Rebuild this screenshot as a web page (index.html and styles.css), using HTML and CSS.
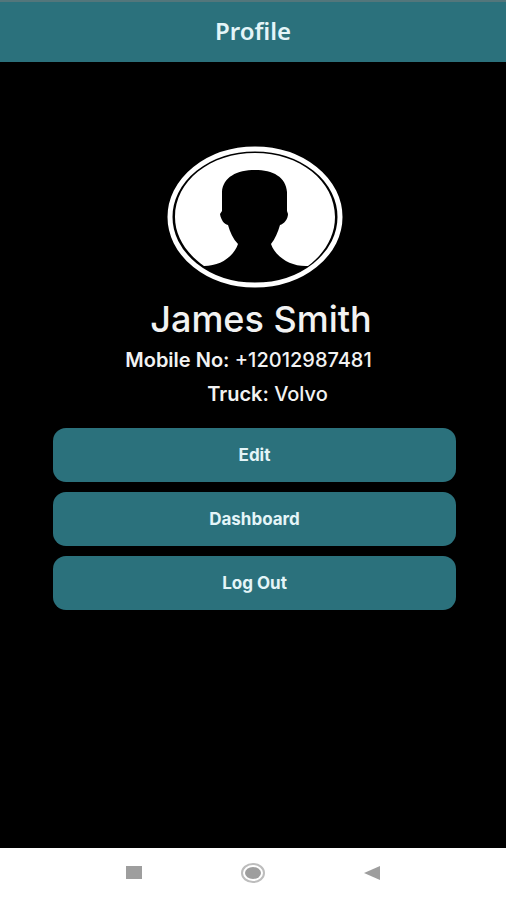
FILE: index.html
```html
<!DOCTYPE html>
<html lang="en">

<head>
    <meta charset="UTF-8">
    <meta name="viewport" content="width=device-width, initial-scale=1.0">
    <title>Profile</title>
    <link rel="stylesheet" href="styles.css">
</head>

<body>
    <header class="header">
        <h1>Profile</h1>
    </header>
    <main class="profile">
        <svg class="avatar" viewBox="0 0 176 142" role="img" aria-label="Avatar">
            <ellipse cx="88" cy="71" rx="85" ry="68" fill="#000" stroke="#fff" stroke-width="5" />
            <path fill="#fff" d="M37 120C20 108 8 91 8 71C8 35 43 7 88 7S168 35 168 71C168 91 157 108 141 120C123 121 108 110 104 98C108 93 111 86 113 79C117 78 121 73 121 68L120 65V46C119 31 106 24 88 24S56 31 55 46V65L53 68C54 74 57 78 61 79C63 86 66 93 71 98C67 110 54 120 37 120Z" />
        </svg>
        <div class="details">
            <h2 class="name">James Smith</h2>
            <p><b>Mobile No:</b> +12012987481</p>
            <p class="truck"><b>Truck:</b> Volvo</p>
        </div>
        <div class="actions">
            <button class="button" type="button">Edit</button>
            <button class="button" type="button">Dashboard</button>
            <button class="button" type="button">Log Out</button>
        </div>
    </main>
    <nav class="navbar">
        <button type="button" aria-label="Recent apps">
            <svg width="16" height="14" viewBox="0 0 16 14"><path fill="#9e9e9e" d="M0 0h16v13H0z" /></svg>
        </button>
        <button type="button" aria-label="Home">
            <svg width="26" height="20" viewBox="0 0 26 20">
                <ellipse cx="13" cy="10" rx="11" ry="9" fill="#fff" stroke="#bdbdbd" stroke-width="2" />
                <ellipse cx="13" cy="10" rx="8" ry="6" fill="#9e9e9e" />
            </svg>
        </button>
        <button type="button" aria-label="Back">
            <svg width="16" height="14" viewBox="0 0 16 14"><path fill="#9e9e9e" d="M16 0v14L0 7z" /></svg>
        </button>
    </nav>
</body>

</html>
```
FILE: styles.css
```css
* {
    box-sizing: border-box;
}

body {
    margin: 0;
    min-height: 100vh;
    display: flex;
    flex-direction: column;
    background: #000;
    color: #F2F2F2;
    font-family: Inter, Roboto, sans-serif;
}

h1,
h2,
p {
    margin: 0;
}

button {
    border: none;
    cursor: pointer;
}

.header {
    padding: 14px 0 16px;
    border-top: 2px solid #53767B;
    background: #2B717C;
    color: #E4F5F8;
    text-align: center;
}

.header h1 {
    font: 600 24px/30px "Noto Sans", sans-serif;
}

.profile {
    flex: 1;
    display: flex;
    flex-direction: column;
    align-items: center;
    padding: 84px 50px 20px 53px;
}

.avatar {
    width: 176px;
    height: 142px;
}

.details {
    padding: 7px 12px 0 0;
    font-size: 20px;
    line-height: 34px;
    font-weight: 500;
    text-align: right;
}

.details b {
    font-weight: 600;
}

.name {
    font-size: 36px;
    line-height: 48px;
    font-weight: 500;
}

.truck {
    padding-right: 44px;
}

.actions {
    display: flex;
    flex-direction: column;
    gap: 10px;
    width: 100%;
    padding-top: 17px;
}

.button {
    padding: 15px;
    border-radius: 13px;
    background: #2B717C;
    color: #E4F5F8;
    font: 700 17px/24px Inter, Roboto, sans-serif;
}

.button:hover {
    background: #32808C;
}

.navbar {
    display: flex;
    justify-content: center;
    align-items: center;
    gap: 98px;
    height: 52px;
    padding-bottom: 2px;
    background: #FFF;
}

.navbar button {
    display: flex;
    padding: 0;
    background: none;
}
```
